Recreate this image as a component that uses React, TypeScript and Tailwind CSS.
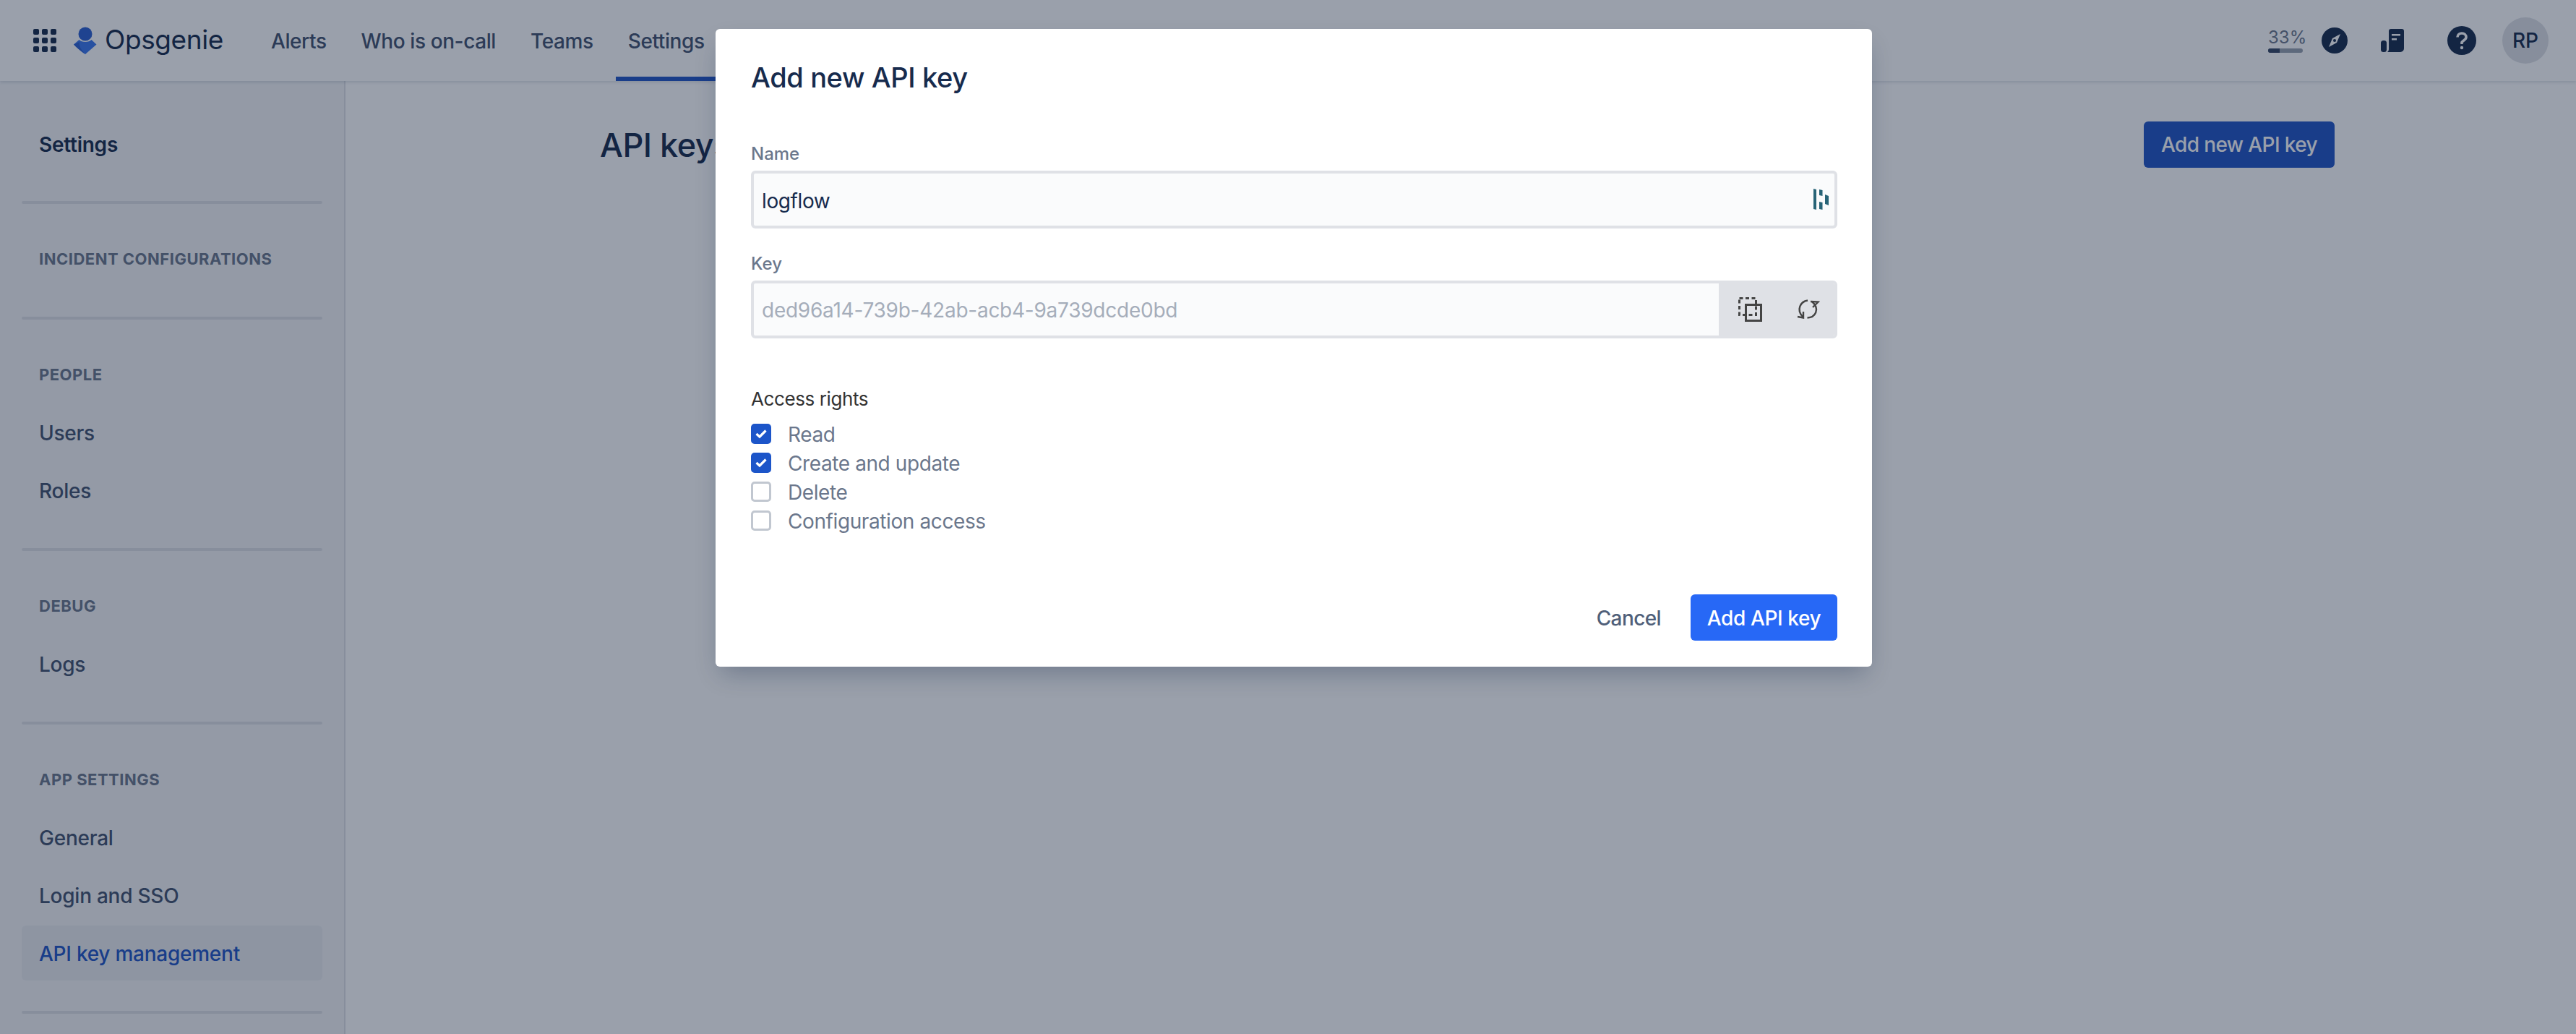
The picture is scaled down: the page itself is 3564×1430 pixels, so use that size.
import React from 'react';

const navItems = ['Alerts', 'Who is on-call', 'Teams', 'Settings'];

const groups = [
  { title: 'INCIDENT CONFIGURATIONS', items: [] as string[] },
  { title: 'PEOPLE', items: ['Users', 'Roles'] },
  { title: 'DEBUG', items: ['Logs'] },
  { title: 'APP SETTINGS', items: ['General', 'Login and SSO', 'API key management'] },
];

const rights = [
  { label: 'Read', checked: true },
  { label: 'Create and update', checked: true },
  { label: 'Delete', checked: false },
  { label: 'Configuration access', checked: false },
];

const GridIcon = () => (
  <svg width="32" height="32" viewBox="0 0 32 32" fill="#172b4d">
    {[0, 12, 24].map(y =>
      [0, 12, 24].map(x => <rect key={`${x}-${y}`} x={x} y={y} width="8" height="8" rx="2" />)
    )}
  </svg>
);

const LogoIcon = () => (
  <svg width="32" height="38" viewBox="0 0 32 38">
    <circle cx="16" cy="10" r="9.5" fill="#2c5fd0" />
    <path d="M0 24.5 L7.5 18 C11 22 21 22 24.5 18 L31.5 24.5 L16 38 C9 33 4 29 0 24.5Z" fill="#3b78ee" />
    <path d="M8 21 C7 26 10 32 16 38 C9 33 4 29 0 24.5Z" fill="#2c5fd0" />
  </svg>
);

const CompassIcon = () => (
  <svg width="36" height="36" viewBox="0 0 36 36">
    <circle cx="18" cy="18" r="18" fill="#172b4d" />
    <path d="M26 9 L21 21 L10 27 L15 15Z" fill="#fff" />
    <circle cx="18" cy="18" r="2" fill="#172b4d" />
  </svg>
);

const DocIcon = () => (
  <svg width="32" height="32" viewBox="0 0 32 32">
    <path d="M11 3 a3 3 0 0 1 3-3 h15 a3 3 0 0 1 3 3 v24 a5 5 0 0 1-5 5 H9 c1-1 2-2 2-4Z" fill="#172b4d" />
    <rect x="0" y="16" width="8" height="16" rx="3.5" fill="#172b4d" />
    <rect x="15" y="7" width="12" height="2.5" fill="#fff" />
    <rect x="15" y="13" width="7" height="2.5" fill="#fff" />
  </svg>
);

const HelpIcon = () => (
  <svg width="40" height="40" viewBox="0 0 40 40">
    <circle cx="20" cy="20" r="20" fill="#172b4d" />
    <path d="M14 15.5 C14 12 17 10 20 10 C23.5 10 26 12.5 26 15.5 C26 19 22 19.5 20 22.5 V25" fill="none" stroke="#fff" strokeWidth="3.6" />
    <circle cx="20" cy="30" r="2.2" fill="#fff" />
  </svg>
);

const DashlaneIcon = () => (
  <svg width="22" height="30" viewBox="0 0 22 30" fill="#286477">
    <path d="M0 0 L4 1 V29 L0 28Z" />
    <path d="M8 1 L12.500 2 V10 L8 9Z" />
    <path d="M8 18 L12.500 19 V29 L8 28Z" />
    <path d="M16 8 L21 10 V23 L16 21Z" />
  </svg>
);

const CopyIcon = () => (
  <svg width="34" height="34" viewBox="0 0 34 34" fill="none" stroke="#444" strokeWidth="3">
    <rect x="1.500" y="1.500" width="23" height="23" strokeDasharray="5 3.500" />
    <rect x="10.500" y="10.500" width="21" height="22" />
  </svg>
);

const RefreshIcon = () => (
  <svg width="32" height="28" viewBox="0 0 32 28" fill="none" stroke="#444" strokeWidth="2.400">
    <path d="M15 1.500 C5 3 -1 14 8 24" />
    <path d="M1 24 L9 25.500 V17" />
    <path d="M14.500 25.500 C25 25 33 14 21 3" />
    <path d="M19 3 L29.500 3.500 L22 11" />
  </svg>
);

const Check = () => (
  <svg width="16" height="14" viewBox="0 0 16 14" fill="none" stroke="#fff" strokeWidth="3.200">
    <path d="M1.500 7 L6 11 L14.500 2.500" />
  </svg>
);

export default function App() {
  return (
    <div className="relative h-[1430px] w-[3564px] overflow-hidden bg-white font-['Inter',sans-serif] tracking-[-0.4px] text-[#172b4d]">
      <header className="relative z-10 flex h-[112px] items-center bg-white pl-[46px] pr-[38px] shadow-[0_2px_4px_rgba(9,30,66,0.13)]">
        <GridIcon />
        <div className="ml-[24px] flex items-center gap-[11px]">
          <LogoIcon />
          <span className="pb-1 text-[37px] font-normal leading-none">Opsgenie</span>
        </div>
        <nav className="ml-[42px] flex h-full">
          {navItems.map(item => (
            <div key={item} className="relative flex h-full items-center px-[24px] pt-[2px] text-[28px] font-medium text-[#42526e]">
              {item}
              {item === 'Settings' && <div className="absolute bottom-0 left-[7px] right-0 h-[6px] bg-[#2155c5]" />}
            </div>
          ))}
        </nav>
        <div className="ml-auto flex items-center tracking-normal">
          <div className="flex w-[52px] flex-col">
            <span className="text-[24px] leading-[24px] text-[#6b778c]">33%</span>
            <div className="mt-[3px] h-[6px] w-[48px] overflow-hidden rounded-full bg-[#97a0af]">
              <div className="h-full w-[16px] bg-[#344563]" />
            </div>
          </div>
          <div className="ml-[22px]"><CompassIcon /></div>
          <div className="ml-[46px]"><DocIcon /></div>
          <div className="ml-[60px]"><HelpIcon /></div>
          <div className="ml-[36px] flex size-[64px] items-center justify-center rounded-full bg-[#dfe1e6] text-[28px] font-medium">RP</div>
        </div>
      </header>

      <div className="flex h-[1318px]">
        <aside className="w-[478px] shrink-0 border-r-2 border-[#dfe1e6] bg-[#f4f5f7] px-[30px] tracking-[-0.25px]">
          <div className="flex h-[166px] items-center pl-[24px] pt-[10px] text-[28px] font-semibold">Settings</div>
          {groups.map(group => (
            <div key={group.title}>
              <div className="h-[4px] rounded-sm bg-[#dfe1e6]" />
              <div className="mt-[36px] flex h-[80px] items-center pl-[24px] text-[22px] font-bold tracking-[0.5px] text-[#6b778c]">{group.title}</div>
              <div className="flex flex-col">
                {group.items.map(item => (
                  <div key={item} className="flex h-[80px] items-center">
                    <div className={`flex h-[76px] w-full items-center rounded-md pl-[24px] pt-[2px] text-[28px] font-medium ${item === 'API key management' ? 'bg-[#ebecf0] text-[#2155c5]' : 'text-[#42526e]'}`}>
                      {item}
                    </div>
                  </div>
                ))}
              </div>
              <div className="h-[40px]" />
            </div>
          ))}
          <div className="h-[4px] rounded-sm bg-[#dfe1e6]" />
        </aside>

        <main className="flex-1 pl-[352px] pr-[334px]">
          <div className="flex h-[120px] items-center justify-between pt-[56px]">
            <h1 className="text-[45px] font-medium leading-none tracking-[-0.5px]">API keys</h1>
            <button className="h-[64px] w-[264px] rounded-md bg-[#2155c5] text-[28px] font-medium tracking-[-0.6px] text-white">Add new API key</button>
          </div>
        </main>
      </div>

      <div className="absolute inset-0 z-20 bg-[#0f1c38]/[.42]" />

      <div className="absolute left-[990px] top-[40px] z-30 w-[1600px] rounded-md bg-white pb-[36px] pl-[49px] pr-[48px] pt-[40px] shadow-[0_16px_32px_-8px_rgba(9,30,66,0.3)]">
        <h2 className="text-[38px] font-medium leading-[54px] tracking-[-0.4px]">Add new API key</h2>

        <label className="mt-[61px] block pt-[3px] text-[24px] font-medium leading-[29px] tracking-normal text-[#6b778c]">Name</label>
        <div className="mt-[9px] flex h-[80px] items-center rounded-md border-4 border-[#dfe1e6] bg-[#fafbfc] pl-[11px] pr-[7px]">
          <span className="flex-1 pt-[3px] text-[28px]">logflow</span>
          <DashlaneIcon />
        </div>

        <label className="mt-[31px] block pt-[3px] text-[24px] font-medium leading-[29px] tracking-normal text-[#6b778c]">Key</label>
        <div className="mt-[9px] flex h-[80px] overflow-hidden rounded-md border-4 border-[#dfe1e6] bg-[#fafbfc]">
          <div className="flex flex-1 items-center pl-[11px] pt-[2px] text-[28px] tracking-[-0.25px] text-[#a5adba]">ded96a14-739b-42ab-acb4-9a739dcde0bd</div>
          <div className="flex w-[160px] items-center bg-[#dfe1e6] pl-[27px]">
            <CopyIcon />
            <div className="ml-[47px]"><RefreshIcon /></div>
          </div>
        </div>

        <div className="mt-[68px] text-[26px] leading-[32px] text-[#333]">Access rights</div>
        <div className="mt-[12px] flex flex-col">
          {rights.map(r => (
            <div key={r.label} className="flex h-[40px] items-center">
              <div className={`flex size-[28px] items-center justify-center rounded-[5px] ${r.checked ? 'bg-[#1c55c9]' : 'border-[3px] border-[#c1c7d0] bg-white'}`}>
                {r.checked && <Check />}
              </div>
              <span className="ml-[23px] pt-[1px] text-[28px] text-[#6b778c]">{r.label}</span>
            </div>
          ))}
        </div>

        <div className="mt-[82px] flex items-center justify-end">
          <span className="pt-[2px] text-[28px] font-medium tracking-[-0.6px] text-[#505f79]">Cancel</span>
          <button className="ml-[41px] h-[64px] w-[203px] rounded-md bg-[#2768f6] pt-[1px] text-[28px] font-medium text-white">Add API key</button>
        </div>
      </div>
    </div>
  );
}
